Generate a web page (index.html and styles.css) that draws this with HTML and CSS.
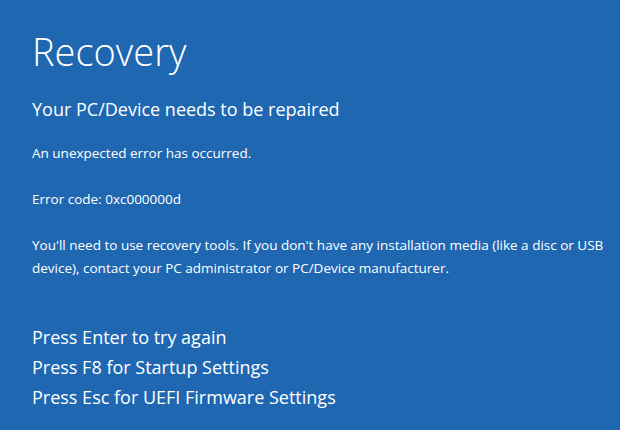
FILE: index.html
```html
<!DOCTYPE HTML>
<html lang="en-US">
<head>
	<meta http-equiv="Content-Type" content="text/html;charset=UTF-8">
	<title>Recovery</title>
	<link rel="stylesheet" href="styles.css">
</head>
<body>
	<div id="screen">
		<h1>Recovery</h1>
		<h2>Your PC/Device needs to be repaired</h2>
		<p>An unexpected error has occurred.</p>
		<p>Error code: 0xc000000d</p>
		<p>You'll need to use recovery tools. If you don't have any installation media (like a disc or USB device), contact your PC administrator or PC/Device manufacturer.</p>
		<ul class="keys">
			<li>Press Enter to try again</li>
			<li>Press F8 for Startup Settings</li>
			<li>Press Esc for UEFI Firmware Settings</li>
		</ul>
	</div>
</body>
</html>
```

FILE: styles.css
```css
html,body{
	padding: 0;
	margin: 0;
	height: 100%;
	background-color: #2067b2;
}
#screen{
	padding: 26px 0 0 32px;
	color: #fff;
	font-family: "Open Sans", "Noto Sans", sans-serif;
}
#screen h1{
	margin: 0;
	font-size: 38px;
	font-weight: 300;
	line-height: 50px;
}
#screen h2{
	margin: 21px 0 0;
	font-size: 18px;
	font-weight: 400;
	line-height: 24px;
}
#screen p{
	margin: 23px 0 0;
	font-size: 13.5px;
	line-height: 23px;
	max-width: 590px;
}
#screen h2+p{
	margin-top: 21px;
}
.keys{
	list-style: none;
	margin: 42px 0 0;
	padding: 0;
	font-size: 18px;
	line-height: 30px;
}
```
